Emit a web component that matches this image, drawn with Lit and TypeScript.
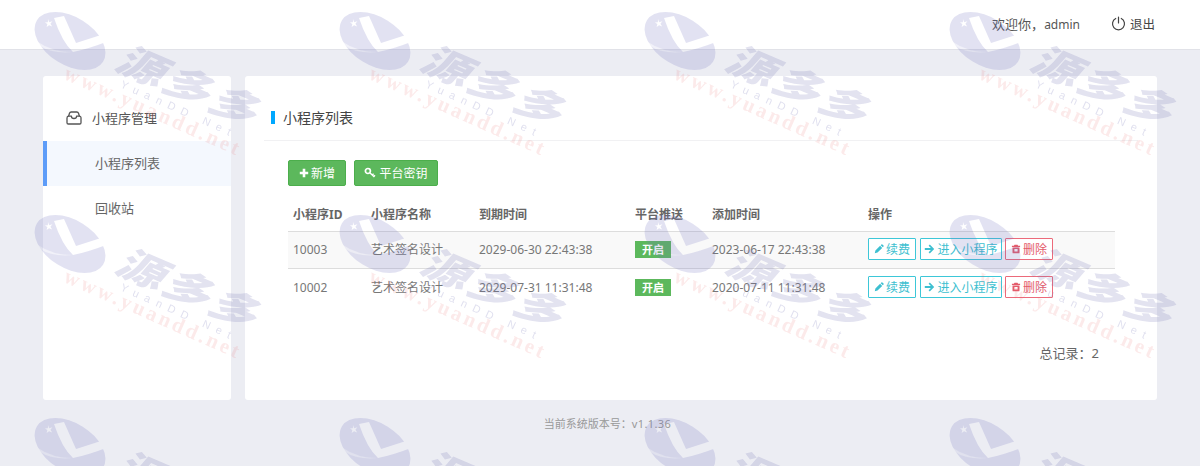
import { LitElement, html, css, svg } from "lit";
import { customElement } from "lit/decorators.js";

const rows = [
  { id: "10003", name: "艺术签名设计", end: "2029-06-30 22:43:38", add: "2023-06-17 22:43:38" },
  { id: "10002", name: "艺术签名设计", end: "2029-07-31 11:31:48", add: "2020-07-11 11:31:48" },
];

const plus = html`<svg class="ic" width="10" height="10" viewBox="0 0 10 10"><path d="M3.700 0.800h2.600v2.900h2.900v2.600H6.300v2.900H3.700V6.300H0.800V3.700h2.900z" fill="currentColor"/></svg>`;
const key = html`<svg class="ic" width="12" height="12" viewBox="0 0 12 12"><g fill="none" stroke="currentColor"><circle cx="3.900" cy="4" r="2.500" stroke-width="1.700"/><path d="M5.800 5.800l4.600 4.200M8.200 8l1.400-1.300M9.800 9.500l1.200-1.200" stroke-width="1.400"/></g></svg>`;
const pencil = html`<svg class="ic" width="10" height="10" viewBox="0 0 10 10"><path d="M0.800 9.200l0.600-2.700 4.700-4.700 2.100 2.100-4.700 4.700zM6.700 1.200l0.700-0.700a.7.7 0 0 1 1 0l1.100 1.100a.7.7 0 0 1 0 1l-.7.700z" fill="currentColor"/></svg>`;
const arrow = html`<svg class="ic" width="11" height="10" viewBox="0 0 11 10"><path d="M5.800 0.600l4.400 4.400-4.400 4.400-1.200-1.200 2.300-2.300H0.800V4.100h6.100L4.600 1.800z" fill="currentColor"/></svg>`;
const trash = html`<svg class="ic" width="10" height="10" viewBox="0 0 10 10"><path fill-rule="evenodd" d="M3.500 0.800h3l.6 1h2v1.100H.9V1.800h2zM1.500 3.400h7v5a.9.9 0 0 1-.9.9H2.400a.9.9 0 0 1-.9-.9zM3.400 5v2.500h3.200V5z" fill="currentColor"/></svg>`;

const tile = svg`
  <g>
    <g mask="url(#wmlogo)"><ellipse cx="70" cy="41" rx="39" ry="24" transform="rotate(32 70 41)" fill="rgb(112,112,190)" opacity=".2"/></g>
    <text class="wm-cn" transform="translate(191 88) rotate(23) skewX(-18) scale(1.140 .9) translate(0 14)" text-anchor="middle">源多多</text>
    <text class="wm-en" x="179" y="113" text-anchor="middle" transform="rotate(24 179 109)">YuanDD Net</text>
    <text class="wm-url" x="153" y="118" text-anchor="middle" transform="rotate(24 153 112)">www.yuandd.net</text>
  </g>`;

@customElement("app-root")
export class AppRoot extends LitElement {
  static styles = css`
    :host {
      display: block;
      position: relative;
      height: 466px;
      overflow: hidden;
      background: #ecedf3;
      font-family: "Noto Sans", "Noto Sans CJK SC", sans-serif;
      font-size: 12px;
      color: #666;
    }
    .ic { flex: none; }
    header {
      height: 50px;
      box-sizing: border-box;
      background: #fff;
      border-bottom: 1px solid #e1e2e8;
      display: flex;
      align-items: center;
      justify-content: flex-end;
      padding: 0 45px 2px 0;
      color: #555;
      font-size: 13px;
    }
    .user { font-size: 12px; }
    .hello { font-size: 13px; }
    .logout { display: flex; align-items: center; gap: 4px; margin-left: 31px; font-size: 12.500px; color: #444; }
    .wrap { display: flex; gap: 14px; padding: 26px 43px 0; }
    .side {
      width: 188px;
      height: 324px;
      flex: none;
      background: #fff;
      border-radius: 3px;
      box-sizing: border-box;
      padding-top: 20px;
      font-size: 13px;
    }
    .side-head {
      height: 45px;
      display: flex;
      align-items: center;
      gap: 10px;
      padding: 0 0 2px 23px;
      color: #555;
      box-sizing: border-box;
    }
    .item { height: 45px; box-sizing: border-box; display: flex; align-items: center; padding: 0 0 2px 52px; color: #666; }
    .item.on { background: #f4f8fe; border-left: 4px solid #5d9cf8; padding-left: 48px; }
    .main {
      flex: 1;
      height: 324px;
      background: #fff;
      border-radius: 3px;
      box-sizing: border-box;
      padding: 0 19px;
    }
    .title {
      height: 65px;
      box-sizing: border-box;
      border-bottom: 1px solid #f1f1f3;
      display: flex;
      align-items: center;
      padding: 17px 0 0 7px;
      color: #444;
      font-size: 14px;
      gap: 8px;
    }
    .title i { width: 4px; height: 13px; background: #00a8ff; margin-top: 2px; }
    .tools { display: flex; gap: 8px; padding: 19px 0 0 24px; }
    .btn {
      height: 26px;
      box-sizing: border-box;
      display: flex;
      align-items: center;
      justify-content: center;
      gap: 2px;
      background: #5cb85c;
      border: 1px solid #4cae4c;
      border-radius: 2px;
      color: #fff;
      font-size: 12px;
    }
    .btn.add { width: 58px; }
    .btn.keyb { width: 84px; gap: 3px; }
    table {
      border-collapse: collapse;
      table-layout: fixed;
      width: 827px;
      margin: 11px 0 0 24px;
    }
    th, td { box-sizing: border-box; padding: 0 0 0 5px; text-align: left; vertical-align: middle; white-space: nowrap; }
    th { height: 34px; font-weight: 700; color: #666; padding-top: 1px; }
    td { height: 37.500px; border-top: 1px solid #ddd; color: #777; padding-bottom: 1px; }
    thead tr th { border-bottom: 1px solid #ddd; }
    tbody tr:first-child td { border-top: none; background: #f9f9f9; }
    .tag {
      display: inline-block;
      width: 36px;
      height: 17px;
      line-height: 17px;
      text-align: center;
      background: #5cb85c;
      color: #fff;
      font-weight: 700;
      font-size: 11px;
      vertical-align: middle;
    }
    .ops { display: flex; gap: 4px; }
    .op {
      height: 22px;
      box-sizing: border-box;
      display: flex;
      align-items: center;
      justify-content: center;
      gap: 2px;
      background: #fff;
      border: 1px solid #3dc7d8;
      color: #3dbfd0;
      border-radius: 1px;
    }
    .op.renew { width: 48px; }
    .op.enter { width: 82px; }
    .op.del { width: 48px; border-color: #ec6a7a; color: #e45b6b; margin-left: -1px; }
    .total { text-align: right; padding: 37px 39px 0 0; color: #666; font-size: 13px; }
    footer { text-align: center; padding: 15px 0 0 15px; font-size: 11px; color: #999; }
    footer span { letter-spacing: .4px; }
    .wm { position: absolute; inset: 0; width: 100%; height: 100%; pointer-events: none; }
    .wm-cn { font-family: "Noto Sans CJK SC", sans-serif; font-weight: 900; font-size: 42px; letter-spacing: 2px; fill: rgb(112,112,180); opacity: .2; }
    .wm-en { font-family: "Liberation Sans", sans-serif; font-size: 11px; letter-spacing: 6.500px; fill: rgb(130,130,190); opacity: .25; }
    .wm-url { font-family: "Liberation Serif", serif; font-weight: 700; font-size: 21px; letter-spacing: 3px; fill: rgb(235,90,90); opacity: .13; }
  `;

  render() {
    return html`
      <header>
        <span class="hello">欢迎你，<span class="user">admin</span></span>
        <span class="logout">
          <svg width="15" height="15" viewBox="0 0 15 15" fill="none" stroke="#444" stroke-width="1.200" stroke-linecap="round"><path d="M4.700 2.500a6 6 0 1 0 5.600 0M7.500 1v6"/></svg>
          退出
        </span>
      </header>
      <div class="wrap">
        <aside class="side">
          <div class="side-head">
            <svg width="16" height="14" viewBox="0 0 16 14" fill="none" stroke="#555" stroke-width="1.300" stroke-linejoin="round"><path d="M2.500 5.500L3.500 2.200Q3.900 1 5.200 1h5.600q1.300 0 1.700 1.200l1 3.300"/><path d="M1 7v4.800Q1 13 2.300 13h11.400q1.300 0 1.300-1.200V7"/><path d="M1 7q0-1.800 1.800-1.800h2.700v.6q0 1.700 2.500 1.700t2.500-1.700v-.6h2.700Q15 5.200 15 7"/></svg>
            小程序管理
          </div>
          <div class="item on">小程序列表</div>
          <div class="item">回收站</div>
        </aside>
        <main class="main">
          <div class="title"><i></i>小程序列表</div>
          <div class="tools">
            <div class="btn add">${plus}新增</div>
            <div class="btn keyb">${key}平台密钥</div>
          </div>
          <table>
            <colgroup>
              <col style="width:78px" /><col style="width:108px" /><col style="width:156px" />
              <col style="width:77px" /><col style="width:156px" /><col style="width:252px" />
            </colgroup>
            <thead>
              <tr><th>小程序ID</th><th>小程序名称</th><th>到期时间</th><th>平台推送</th><th>添加时间</th><th>操作</th></tr>
            </thead>
            <tbody>
              ${rows.map(
                (r) => html`<tr>
                  <td>${r.id}</td><td>${r.name}</td><td>${r.end}</td>
                  <td><span class="tag">开启</span></td>
                  <td>${r.add}</td>
                  <td><div class="ops">
                    <div class="op renew">${pencil}续费</div>
                    <div class="op enter">${arrow}进入小程序</div>
                    <div class="op del">${trash}删除</div>
                  </div></td>
                </tr>`
              )}
            </tbody>
          </table>
          <div class="total">总记录：2</div>
        </main>
      </div>
      <footer>当前系统版本号：<span>v1.1.36</span></footer>
      <svg class="wm" aria-hidden="true">
        <defs>
          <mask id="wmlogo" maskUnits="userSpaceOnUse" x="0" y="0" width="305" height="203">
            <rect width="305" height="203" fill="#fff"></rect>
            <path d="M54 18 L64 16 L76 43 L101 35 L106 42 Q88 49 73 52 Q62 42 54 18Z" fill="#000"></path>
            <path d="M38 42 Q52 52 73 52 Q52 54 40 46Z" fill="#000" opacity=".5"></path>
            <path d="M48 19l1.200 3.200 3.200-1-2 2.600 1.800 2.700-3.100-1.200-2.500 1.800.8-3.200-2.600-1.500 3.100-.2z" fill="#000"></path>
          </mask>
          <pattern id="wmp" width="305" height="203" patternUnits="userSpaceOnUse">${tile}</pattern>
        </defs>
        <rect width="100%" height="100%" fill="url(#wmp)"></rect>
      </svg>
    `;
  }
}
